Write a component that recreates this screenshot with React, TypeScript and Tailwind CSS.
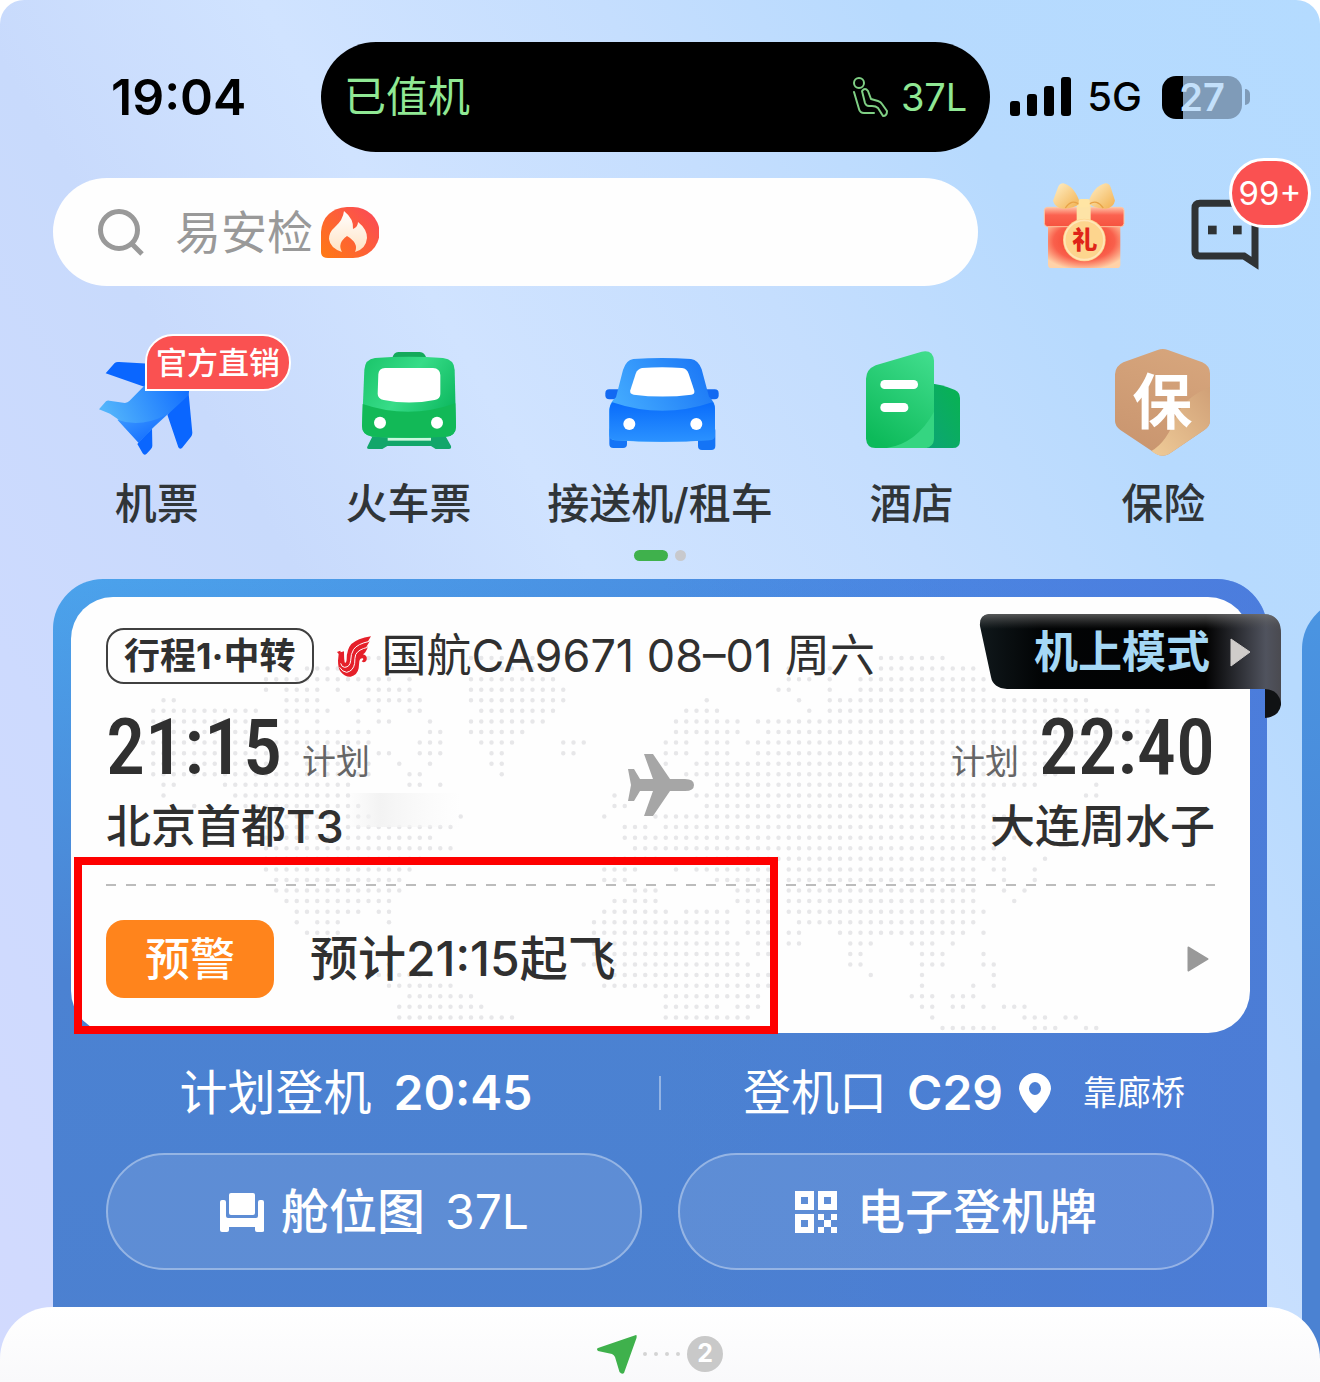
import type { ReactNode } from 'react';

const MAP_ROWS: number[][][] = [
  [[22, 24], [32, 40], [72, 78]],
  [[16, 20], [33, 40], [63, 63], [67, 67], [72, 81]],
  [[12, 24], [26, 26], [32, 40], [63, 65], [67, 67], [70, 83]],
  [[12, 12], [14, 17], [19, 19], [22, 26], [32, 41], [62, 63], [67, 67], [70, 82]],
  [[2, 3], [14, 17], [20, 20], [22, 27], [32, 41], [55, 55], [64, 64], [67, 92]],
  [[1, 11], [14, 18], [21, 21], [23, 23], [26, 27], [33, 40], [53, 56], [65, 65], [67, 95], [97, 98]],
  [[1, 11], [14, 15], [17, 17], [21, 21], [23, 24], [28, 28], [32, 39], [52, 58], [60, 98]],
  [[1, 11], [14, 22], [28, 29], [32, 37], [52, 58], [61, 98]],
  [[0, 22], [27, 29], [33, 36], [41, 43], [51, 53], [55, 57], [59, 97]],
  [[1, 20], [23, 24], [27, 29], [34, 35], [41, 42], [51, 53], [55, 57], [60, 92]],
  [[1, 14], [16, 22], [25, 25], [28, 28], [34, 35], [50, 51], [54, 88]],
  [[1, 22], [26, 27], [35, 35], [53, 89]],
  [[2, 3], [8, 20], [26, 27], [29, 29], [56, 87], [93, 93]],
  [[2, 2], [9, 20], [46, 46], [54, 82], [92, 93]],
  [[5, 5], [10, 21], [46, 47], [55, 82]],
  [[12, 22], [31, 31], [45, 45], [50, 85]],
  [[12, 30], [47, 49], [51, 83]],
  [[12, 28], [47, 86]],
  [[12, 30], [48, 83]],
  [[12, 27], [46, 50], [54, 84], [88, 88]],
  [[12, 26], [45, 48], [52, 52], [54, 61], [63, 81], [83, 84], [87, 87]],
  [[13, 25], [45, 47], [56, 61], [63, 81], [84, 84], [87, 87]],
  [[13, 25], [48, 50], [58, 61], [63, 81], [84, 84], [86, 86]],
  [[14, 24], [46, 50], [58, 61], [63, 81], [85, 85]],
  [[15, 21], [23, 24], [45, 51], [53, 57], [59, 61], [63, 82]],
  [[15, 15], [17, 19], [24, 24], [44, 57], [59, 61], [64, 81]],
  [[16, 19], [44, 57], [59, 61], [63, 64], [68, 80], [82, 82]],
  [[44, 58], [60, 61], [63, 64], [69, 71], [75, 77], [79, 79]],
  [[44, 58], [60, 61], [69, 70], [76, 78], [82, 82]],
  [[24, 24], [43, 59], [69, 70], [76, 78], [82, 83]],
  [[23, 28], [45, 61], [71, 71], [76, 76], [83, 83]],
  [[24, 30], [45, 61], [76, 76], [81, 81], [83, 83]],
  [[26, 32], [51, 60], [75, 77], [79, 81]],
  [[25, 33], [51, 56], [58, 60], [76, 77], [79, 80], [82, 82], [84, 86]],
  [[25, 36], [51, 59], [77, 77], [86, 88], [90, 91]],
  [[78, 83], [87, 89], [92, 93]],
];

function WorldDots() {
  return (
    <svg className="pointer-events-none absolute inset-0 h-full w-full" viewBox="0 0 1179 436" preserveAspectRatio="xMidYMid slice" aria-hidden="true">
      <g stroke="#e7e7e9" strokeWidth="4.500" strokeLinecap="round" strokeDasharray="0 10.25">
        {MAP_ROWS.flatMap((row, r) =>
          row.map(([a, b]) => (
            <path key={`${r}-${a}`} d={`M${72 + a * 10.25} ${61 + r * 10.57}H${72 + b * 10.25 + 0.5}`} />
          )),
        )}
      </g>
      <defs>
        <linearGradient id="smudge" x1="0" x2="1">
          <stop offset="0" stopColor="#f3f3f3" stopOpacity="0" />
          <stop offset=".3" stopColor="#f3f3f3" />
          <stop offset="1" stopColor="#f8f8f8" stopOpacity="0" />
        </linearGradient>
      </defs>
      <rect x="275" y="196" width="115" height="34" fill="url(#smudge)" />
    </svg>
  );
}

function PlaneTicketIcon() {
  return (
    <svg className="h-[110px] w-[110px] overflow-visible" viewBox="126 84 330 330" aria-hidden="true">
      <defs>
        <linearGradient id="pl1" x1="0" y1="0.3" x2="1" y2="0">
          <stop offset="0" stopColor="#53b5fb" />
          <stop offset="1" stopColor="#0f6bff" />
        </linearGradient>
        <linearGradient id="pl2" x1="0" y1="0" x2="1" y2="1">
          <stop offset="0" stopColor="#3f9cff" />
          <stop offset="1" stopColor="#0a63ff" />
        </linearGradient>
      </defs>
      <path d="M137 160 164 129Q169 125 177 126L270 131V206Z" fill="#0a66ff" />
      <path d="M322 284 384 200 397 338Q397 346 393 350L366 384Q359 389 355 382Z" fill="#0a66ff" />
      <path d="M232 372 276 322 277 377Q277 383 273 387L260 401Q253 408 248 400Z" fill="#0a66ff" />
      <path d="M117 268 138 244Q142 241 148 242L195 249Q203 248 208 243L270 180H387V215Q386 224 380 231L284 319Q276 327 270 333L236 365 172 296 150 281Z" fill="url(#pl1)" />
      <path d="M172 299Q240 325 318 285L276 325 236 369Z" fill="url(#pl2)" />
    </svg>
  );
}

function TrainIcon() {
  return (
    <svg className="h-[110px] w-[110px] overflow-visible" viewBox="882 84 330 330" aria-hidden="true">
      <defs>
        <linearGradient id="tr1" x1="0" y1="0" x2="1" y2="0.6">
          <stop offset="0" stopColor="#19c368" />
          <stop offset=".5" stopColor="#37dc88" />
          <stop offset="1" stopColor="#0db85f" />
        </linearGradient>
      </defs>
      <path d="M1000 116Q1003 96 1018 96H1082Q1098 96 1102 116Z" fill="#14a95b" />
      <path d="M942 346H1158L1176 378Q1178 387 1170 387H1130L1116 378H985L970 387H930Q921 387 926 378Z" fill="#12a66a" />
      <rect x="986" y="353" width="130" height="9" fill="#c9f7dc" />
      <path d="M948 114Q1050 106 1152 114Q1186 118 1187 150L1191 320Q1190 348 1160 350Q1050 356 940 350Q909 346 909 318L916 150Q918 117 948 114Z" fill="url(#tr1)" />
      <path d="M911 252Q1050 300 1189 250L1191 320Q1190 348 1160 350Q1050 356 940 350Q909 346 909 318Z" fill="#12b957" />
      <path d="M978 144H1122Q1143 145 1144 165V222Q1144 237 1127 240Q1050 255 974 240Q956 236 956 221L958 163Q959 145 978 144Z" fill="#fff" />
      <circle cx="963" cy="308" r="18" fill="#fff" />
      <circle cx="1134" cy="308" r="18" fill="#fff" />
    </svg>
  );
}

function CarIcon() {
  return (
    <svg className="h-[110px] w-[110px] overflow-visible" viewBox="255 84 330 330" aria-hidden="true">
      <defs>
        <linearGradient id="car1" x1="0" y1="0.5" x2="1" y2="0">
          <stop offset="0" stopColor="#45adff" />
          <stop offset="1" stopColor="#1671f5" />
        </linearGradient>
        <linearGradient id="car2" x1="0" y1="0" x2="0" y2="1">
          <stop offset="0" stopColor="#096cfb" />
          <stop offset="1" stopColor="#2b92ff" />
        </linearGradient>
      </defs>
      <rect x="256" y="208" width="340" height="30" rx="12" fill="#1269f2" />
      <rect x="268" y="320" width="53" height="64" rx="12" fill="#1474f6" />
      <rect x="534" y="320" width="52" height="70" rx="12" fill="#1474f6" />
      <path d="M340 117Q427 111 513 117Q535 120 545 148L567 230Q586 245 585 270V345Q585 360 570 361Q427 370 284 361Q269 360 268 345V270Q269 247 288 232L309 150Q319 119 340 117Z" fill="url(#car1)" />
      <path d="M277 247Q427 298 577 247Q586 255 585 275V345Q585 358 570 360Q427 370 284 360Q268 358 268 345V275Q268 256 277 247Z" fill="url(#car2)" />
      <path d="M366 144Q427 139 486 144Q501 146 506 161L523 212Q525 222 514 224Q427 235 341 224Q328 222 331 211L347 161Q352 147 366 144Z" fill="#fff" />
      <circle cx="328" cy="312" r="18" fill="#fff" />
      <circle cx="529" cy="312" r="18" fill="#fff" />
    </svg>
  );
}

function HotelIcon() {
  return (
    <svg className="h-[110px] w-[110px] overflow-visible" viewBox="1011 84 330 330" aria-hidden="true">
      <defs>
        <linearGradient id="ho1" x1="0.8" y1="0" x2="0.3" y2="1">
          <stop offset="0" stopColor="#3fdc8b" />
          <stop offset="1" stopColor="#0dba5a" />
        </linearGradient>
        <linearGradient id="ho2" x1="1" y1="0" x2="0" y2="1">
          <stop offset="0" stopColor="#08b350" />
          <stop offset="1" stopColor="#0da476" />
        </linearGradient>
      </defs>
      <path d="M1225 190Q1262 192 1305 210Q1320 218 1320 234V362Q1320 384 1298 384H1220Z" fill="url(#ho2)" />
      <path d="M1067 136 1205 95Q1239 88 1242 122V356Q1240 382 1215 384H1066Q1040 383 1038 356V176Q1039 148 1067 136Z" fill="url(#ho1)" />
      <path d="M1242 275V356Q1240 382 1215 384H1100Q1190 370 1242 275Z" fill="#35d581" />
      <rect x="1081" y="180" width="113" height="27" rx="13" fill="#fff" />
      <rect x="1081" y="249" width="84" height="27" rx="13" fill="#fff" />
    </svg>
  );
}

function InsuranceIcon() {
  return (
    <svg className="h-[110px] w-[110px] overflow-visible" viewBox="327 624 330 330" aria-hidden="true">
      <defs>
        <linearGradient id="in1" x1="0.6" y1="0" x2="0.3" y2="1">
          <stop offset="0" stopColor="#d6a57c" />
          <stop offset="1" stopColor="#c9956f" />
        </linearGradient>
        <linearGradient id="in2" x1="1" y1="0" x2="0" y2="1">
          <stop offset="0" stopColor="#d0a077" />
          <stop offset="1" stopColor="#efcb98" />
        </linearGradient>
      </defs>
      <path d="M476 630Q491 624 507 630L610 667Q632 677 633 700V843Q632 860 616 870L510 942Q491 953 472 942L364 870Q348 858 348 843V703Q349 678 373 667Z" fill="url(#in1)" />
      <path d="M633 740V843Q632 860 616 870L510 942Q485 956 457 933Q505 905 530 830Q560 770 633 740Z" fill="url(#in2)" />
      <text x="490" y="851" textAnchor="middle" fontSize="180" fontWeight="700" fill="#fff" fontFamily="Noto Sans CJK SC, sans-serif">保</text>
    </svg>
  );
}

function GiftIcon() {
  return (
    <svg className="h-[90px] w-20 overflow-visible" viewBox="132 141 240 270" aria-hidden="true">
      <defs>
        <radialGradient id="gf1" cx=".5" cy=".4" r=".65">
          <stop offset="0" stopColor="#f2331f" />
          <stop offset=".65" stopColor="#f9604c" />
          <stop offset="1" stopColor="#ffd2a8" />
        </radialGradient>
        <linearGradient id="gf2" x1="0" y1="0" x2="0" y2="1">
          <stop offset="0" stopColor="#ffc0a4" />
          <stop offset=".4" stopColor="#fb6250" />
          <stop offset="1" stopColor="#f5533f" />
        </linearGradient>
        <linearGradient id="gf3" x1="0" y1="0" x2="1" y2="1">
          <stop offset="0" stopColor="#fff0c8" />
          <stop offset="1" stopColor="#f2b04e" />
        </linearGradient>
      </defs>
      <rect x="144" y="250" width="217" height="134" rx="10" fill="url(#gf1)" />
      <rect x="133" y="202" width="239" height="58" rx="10" fill="url(#gf2)" stroke="#ffc7a2" strokeWidth="3" />
      <rect x="230" y="190" width="42" height="66" fill="#fde3a6" />
      <path d="M240 190Q225 140 190 130Q178 130 174 142L159 182Q165 204 190 206Q222 206 240 190Z" fill="url(#gf3)" />
      <path d="M264 190Q279 140 316 130Q328 130 332 142L345 182Q340 204 316 206Q284 206 264 190Z" fill="url(#gf3)" />
      <path d="M236 192Q215 176 196 204M268 192Q290 176 310 204" fill="none" stroke="#e8a347" strokeWidth="4" />
      <rect x="236" y="177" width="33" height="25" rx="6" fill="#ffe5a4" />
      <circle cx="253" cy="300" r="64" fill="#fdd58e" />
      <circle cx="253" cy="300" r="59" fill="none" stroke="#ffe6b8" strokeWidth="5" />
      <text x="254" y="328" textAnchor="middle" fontSize="76" fontWeight="900" fill="#df2418" fontFamily="Noto Sans CJK SC, sans-serif">礼</text>
    </svg>
  );
}

function ChatIcon() {
  return (
    <svg className="h-[72px] w-[70px] overflow-visible" viewBox="570 168 210 216" aria-hidden="true">
      <path d="M765 190H600Q585 190 585 205V333Q585 348 600 348H732L765 370Z" fill="none" stroke="#2f3335" strokeWidth="21" />
      <rect x="624" y="257" width="26" height="26" fill="#2f3335" />
      <rect x="699" y="257" width="26" height="26" fill="#2f3335" />
    </svg>
  );
}

function FlameIcon() {
  return (
    <svg className="h-[51px] w-[58px]" viewBox="0 0 58 51" aria-hidden="true">
      <defs>
        <linearGradient id="fl" x1="0" y1="1" x2="1" y2="0.2">
          <stop offset="0" stopColor="#ff7a12" />
          <stop offset="1" stopColor="#fb4b55" />
        </linearGradient>
        <linearGradient id="fl2" x1="0" y1="0" x2="0" y2="1">
          <stop offset="0" stopColor="#fff" />
          <stop offset="1" stopColor="#ffe3c4" />
        </linearGradient>
      </defs>
      <path d="M26 0H32A26 25 0 0 1 32 51H7Q0 51 0 45V25Q2 2 26 0Z" fill="url(#fl)" />
      <path d="M23 4Q33 12 32 22Q37 20 37 15Q46 22 46 31Q45 42 34 45Q38 36 26 29Q16 36 21 45Q9 41 8 32Q8 25 14 20Q22 13 23 4Z" fill="url(#fl2)" />
    </svg>
  );
}

function PhoenixLogo() {
  return (
    <svg className="h-[43px] w-9" viewBox="78 45 108 129" aria-hidden="true">
      <path
        fill="#e5202a"
        d="M183 49Q142 56 124 72Q110 88 110 118Q109 130 105 128Q102 126 102 94L92 97 91 92 81 96 86 102 84 122Q84 145 92 155Q106 172 122 170Q142 166 146 145L148 124Q150 114 158 115Q163 118 155 124Q164 131 170 120Q173 106 159 103Q168 97 174 80L169 81 179 64 174 64Z"
      />
      <g fill="none" stroke="#fff" strokeWidth="3">
        <path d="M178 64Q142 72 131 88Q122 102 122 122Q120 141 104 142Q95 142 92 130" />
        <path d="M173 82Q145 88 137 104Q134 114 134 130Q130 153 110 157Q97 156 89 142" />
      </g>
    </svg>
  );
}

const services: { label: string; icon: ReactNode; tag?: string }[] = [
  { label: '机票', icon: <PlaneTicketIcon />, tag: '官方直销' },
  { label: '火车票', icon: <TrainIcon /> },
  { label: '接送机/租车', icon: <CarIcon /> },
  { label: '酒店', icon: <HotelIcon /> },
  { label: '保险', icon: <InsuranceIcon /> },
];

function StatusBar() {
  return (
    <header className="flex items-center pt-[42px] pr-[70px] pl-[111px]">
      <time className="w-[210px] text-[50px] font-semibold text-black">19:04</time>
      <div className="flex h-[110px] flex-1 items-center rounded-[55px] bg-black px-[23px] text-[42px] text-[#90e894]">
        <span className="flex-1">已值机</span>
        <svg className="mr-3 h-10 w-9" viewBox="0 0 36 40" fill="none" stroke="#7fcf84" strokeWidth="2" strokeLinejoin="round" strokeLinecap="round" aria-hidden="true">
          <circle cx="6" cy="6" r="5" />
          <path d="M1 15 6 32Q7 36 11 36H21" />
          <path d="M9 14Q12 10 15 14L18 22 25 24Q28 25 29 27L34 34Q34 39 30 39L25 31Q23 29 19 29H16Q13 29 12 26Z" />
        </svg>
        <span className="text-[38px]">37L</span>
      </div>
      <svg className="ml-5 h-10 w-[61px]" viewBox="0 0 61 40" aria-hidden="true">
        <rect x="0" y="24" width="10" height="15" rx="3" />
        <rect x="17" y="17" width="10" height="22" rx="3" />
        <rect x="34" y="9" width="10" height="30" rx="3" />
        <rect x="51" y="0" width="10" height="39" rx="3" />
      </svg>
      <span className="ml-4 text-[40px] font-medium text-black">5G</span>
      <div className="ml-5 flex h-[43px] w-20 items-center justify-center rounded-[14px] bg-[linear-gradient(90deg,#000_0_21px,#7f9bb8_21px)] text-[38px] font-semibold text-[#c3e0fb]">27</div>
      <div className="ml-[3px] h-4 w-[5px] rounded-r-full bg-[#7f9bb8]" />
    </header>
  );
}

function FlightCard() {
  return (
    <article className="relative w-full shrink-0 rounded-t-[50px] bg-[linear-gradient(100deg,#4ba3ec_0%,#4a90e2_45%,#4c7fe9_100%)]">
      <div className="absolute inset-0 rounded-t-[50px] bg-[linear-gradient(180deg,transparent_0%,#4b82d2_50%,#4c80d0_100%)]" />
      <div className="absolute inset-y-0 right-0 w-1/2 rounded-tr-[50px] bg-[linear-gradient(90deg,transparent,#4c7ad8aa)]" />
      <div className="relative pt-[18px] pr-[17px] pl-[18px]">
        <section className="relative overflow-hidden rounded-[42px] bg-[#fefefe] px-[35px] pt-[31px] pb-[35px] text-[#303030]">
          <WorldDots />
          <div className="relative">
            <div className="flex h-14 items-center">
              <span className="flex h-14 items-center rounded-[18px] border-2 border-[#404040] px-4 text-[36px] font-bold">行程1·中转</span>
              <span className="mr-[10px] ml-[22px]"><PhoenixLogo /></span>
              <span className="text-[45px] leading-[60px]">国航CA9671 08–01 周六</span>
            </div>
            <div className="mt-[27px] flex items-center justify-between">
              <div>
                <div className="flex h-[70px] items-baseline leading-[74px]">
                  <time className="font-['Roboto_Condensed','Roboto',sans-serif] text-[78px] font-medium">21:15</time>
                  <span className="ml-5 text-[34px] text-[#666]">计划</span>
                </div>
                <div className="mt-[15px] text-[45px] leading-[62px] font-medium">北京首都T3</div>
              </div>
              <svg className="h-16 w-[68px]" viewBox="0 0 68 64" fill="#a6a6a6" aria-hidden="true">
                <path d="M17 1H26L43 26H58Q67 26 67 32Q67 38 58 38H43L26 63H17L26 38H13L7 48H1L4 32 1 16H7L13 26H26Z" />
              </svg>
              <div className="text-right">
                <div className="flex h-[70px] items-baseline justify-end leading-[74px]">
                  <span className="mr-5 text-[34px] text-[#666]">计划</span>
                  <time className="font-['Roboto_Condensed','Roboto',sans-serif] text-[78px] font-medium">22:40</time>
                </div>
                <div className="mt-[15px] text-[45px] leading-[62px] font-medium">大连周水子</div>
              </div>
            </div>
            <div className="mt-[26px] h-0.5 bg-[repeating-linear-gradient(90deg,#bcbcbc_0_10px,transparent_10px_20px)]" />
            <button type="button" className="mt-[34px] flex h-[78px] w-full items-center text-left">
              <span className="flex h-[78px] w-[168px] items-center justify-center rounded-[18px] bg-[#ff841c] text-[45px] font-medium text-white">预警</span>
              <span className="ml-9 flex-1 text-[48px] font-medium">预计21:15起飞</span>
              <svg className="mr-[6px] h-[26px] w-[22px]" viewBox="0 0 22 26" aria-hidden="true">
                <path d="M1.500 1.500 20.500 13 1.500 24.500Z" fill="#999" stroke="#999" strokeWidth="2" strokeLinejoin="round" />
              </svg>
            </button>
          </div>
        </section>
        <div className="pointer-events-none absolute top-[278px] left-[21px] h-[177px] w-[704px] border-8 border-[#fe0000]" />
      </div>
      <div className="relative flex h-[120px] items-center text-[48px] text-white">
        <div className="flex flex-1 items-center justify-center gap-[22px]">
          <span>计划登机</span>
          <time className="font-semibold">20:45</time>
        </div>
        <div className="h-[34px] w-0.5 bg-white/40" />
        <div className="flex flex-1 items-center justify-center">
          <span>登机口</span>
          <span className="ml-5 font-semibold">C29</span>
          <svg className="ml-4 h-10 w-8" viewBox="0 0 32 40" aria-hidden="true">
            <path fillRule="evenodd" fill="#fff" d="M16 0A16 16 0 0 1 32 16Q31 25 18 39Q16 41 14 39Q1 25 0 16A16 16 0 0 1 16 0ZM16 9A6 6.500 0 1 0 16 22A6 6.500 0 1 0 16 9Z" />
          </svg>
          <span className="ml-8 text-[34px]">靠廊桥</span>
        </div>
      </div>
      <div className="relative flex gap-9 px-[53px] pb-28 text-[48px] text-white">
        <button type="button" className="flex h-[117px] flex-1 items-center justify-center rounded-full border-2 border-white/35 bg-white/10">
          <svg className="mr-4 h-10 w-[46px]" viewBox="0 0 46 40" fill="#fff" aria-hidden="true">
            <rect x="10" y="1" width="26" height="22" rx="2" />
            <path d="M1 10Q1 8 3 8H5Q7 8 7 10V24Q7 26 9 26H37Q39 26 39 24V10Q39 8 41 8H43Q45 8 45 10V39Q45 40 43 40H38Q36 40 36 38V35H10V38Q10 40 8 40H3Q1 40 1 38Z" />
          </svg>
          <span className="font-medium">舱位图</span>
          <span className="ml-5">37L</span>
        </button>
        <button type="button" className="flex h-[117px] flex-1 items-center justify-center rounded-full border-2 border-white/35 bg-white/10">
          <svg className="mr-5 h-[42px] w-[42px]" viewBox="0 0 42 42" fill="#fff" aria-hidden="true">
            <path fillRule="evenodd" d="M0 0H19V19H0ZM6 6V13H13V6ZM23 0H42V19H23ZM29 6V13H36V6ZM0 23H19V42H0ZM6 29V36H13V29Z" />
            <path d="M23 23H29V29H36V23H42V29H36V36H42V42H36V36H29V42H23V36H29V29H23Z" />
          </svg>
          <span className="font-medium">电子登机牌</span>
        </button>
      </div>
      <button type="button" className="absolute top-[34px] -right-[14px] h-[106px] w-[302px]">
        <svg className="absolute inset-0 h-full w-full" viewBox="0 0 302 106" aria-hidden="true">
          <defs>
            <linearGradient id="rb" x1="0" x2="1">
              <stop offset="0" stopColor="#10181b" />
              <stop offset=".2" stopColor="#020405" />
              <stop offset=".75" stopColor="#020202" />
              <stop offset=".95" stopColor="#50535e" />
              <stop offset="1" stopColor="#4a4a50" />
            </linearGradient>
            <linearGradient id="rb2" x1="0" x2="0" y1="0" y2="1">
              <stop offset="0" stopColor="#777" stopOpacity=".7" />
              <stop offset=".2" stopColor="#555" stopOpacity="0" />
            </linearGradient>
          </defs>
          <path d="M286 76H302V92Q300 104 286 105Z" fill="#101214" />
          <path d="M10 1H285Q302 2 302 20V90Q300 77 286 76H28Q14 75 12 64L1 13Q0 2 10 1Z" fill="url(#rb)" />
          <path d="M10 1H285Q302 2 302 20V76H28Q14 75 12 64L1 13Q0 2 10 1Z" fill="url(#rb2)" />
          <path d="M252 26 271 39 252 53Z" fill="#cfccca" stroke="#cfccca" strokeWidth="1" strokeLinejoin="round" />
        </svg>
        <span className="relative -mt-7 block pr-4 text-[44px] leading-[78px] font-bold text-[#a5d8f5]">机上模式</span>
      </button>
    </article>
  );
}

export default function App() {
  return (
    <main className="overflow-hidden bg-white font-['Inter','Noto_Sans_CJK_SC',sans-serif] leading-none whitespace-nowrap" lang="zh-CN">
      <div className="rounded-t-[24px] bg-[linear-gradient(60deg,#d2dafe_0%,#cddafe_20%,#c8dafc_36%,#d0e3ff_50%,#c5defe_66%,#b7dafe_80%,#b4dbff_100%)]">
        <StatusBar />
        <div className="mt-[26px] flex items-center pr-[60px] pl-[53px]">
          <label className="flex h-[108px] flex-1 items-center rounded-full bg-[#fefefe] pl-11">
            <svg className="mr-[30px] h-12 w-12" viewBox="0 0 48 48" fill="none" stroke="#999" strokeWidth="5" aria-hidden="true">
              <circle cx="22" cy="22" r="18.500" />
              <path d="M34 35 45 46" />
            </svg>
            <input type="text" placeholder="易安检" aria-label="搜索" className="h-16 w-[146px] text-[46px] outline-none placeholder:text-[#999] placeholder:opacity-100" />
            <FlameIcon />
          </label>
          <button type="button" aria-label="礼物" className="ml-[66px]"><GiftIcon /></button>
          <button type="button" aria-label="消息" className="relative ml-[66px]">
            <ChatIcon />
            <span className="absolute -top-[38px] left-[39px] flex h-[70px] w-[82px] items-center justify-center rounded-full border-[3px] border-white bg-[#fa5151] text-[33px] text-white">99+</span>
          </button>
        </div>
        <nav className="mt-[62px] grid grid-cols-5 px-[31px]">
          {services.map((s) => (
            <a key={s.label} href="#" className="relative flex flex-col items-center text-[42px] leading-[60px] font-medium text-[#303538]">
              {s.icon}
              {s.tag && (
                <span className="absolute -top-[14px] left-[114px] rounded-[28px] rounded-bl-none border-2 border-white bg-[#fa5151] px-[9px] text-[31px] leading-[53px] font-medium text-white">{s.tag}</span>
              )}
              <span className="mt-4">{s.label}</span>
            </a>
          ))}
        </nav>
        <div className="mt-4 flex items-center justify-center gap-[7px]">
          <span className="h-[11px] w-[34px] rounded-full bg-[#3fb14c]" />
          <span className="h-[11px] w-[11px] rounded-full bg-[#c8c9cd]" />
        </div>
        <div className="mt-[18px] overflow-hidden">
          <div className="mx-[53px] flex gap-[35px]">
            <FlightCard />
            <div className="mt-5 w-full shrink-0 rounded-t-[50px] bg-[linear-gradient(180deg,#4a95e2,#4b82d2_60%)]" />
          </div>
        </div>
      </div>
      <footer className="relative -mt-[75px] flex h-[75px] items-center justify-center rounded-t-[52px] bg-[linear-gradient(180deg,#fff,#f9f9fb)] pt-[18px]">
        <svg className="h-10 w-10" viewBox="0 0 40 40" aria-hidden="true">
          <path d="M39 1Q40 1 39.500 4L27 39Q25 41 22.500 38L18 23Q17 21 15 20L1 17Q-1 15 1 14Z" fill="#3fb14c" />
        </svg>
        <div className="mr-[7px] ml-[6px] flex gap-[7px]">
          <span className="h-1 w-1 rounded-full bg-[#d4d4d4]" />
          <span className="h-1 w-1 rounded-full bg-[#d4d4d4]" />
          <span className="h-1 w-1 rounded-full bg-[#d4d4d4]" />
          <span className="h-1 w-1 rounded-full bg-[#d4d4d4]" />
        </div>
        <span className="flex h-9 w-9 items-center justify-center rounded-full bg-[#c9c9c9] text-[25px] font-bold text-white">2</span>
      </footer>
    </main>
  );
}
